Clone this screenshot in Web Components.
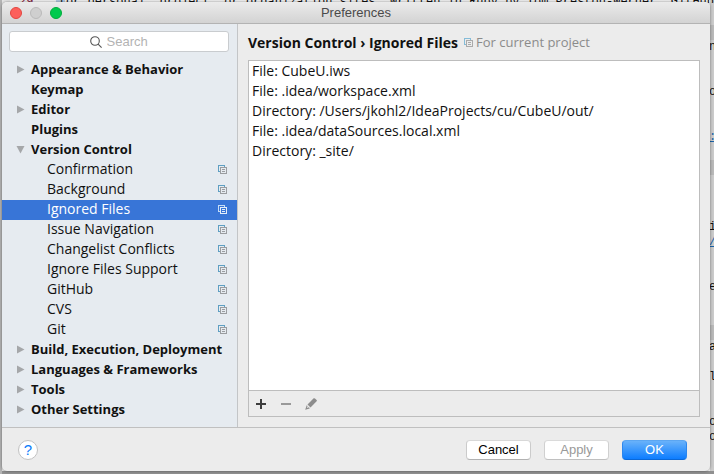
<!DOCTYPE html>
<html lang="en">
<head>
<meta charset="utf-8">
<title>Preferences</title>
<style>
  body { margin: 0; min-height: 100vh; display: flex; position: relative; overflow: hidden; font: 14px "Open Sans", "Noto Sans", sans-serif; color: #111; }
</style>
</head>
<body>
<code-backdrop></code-backdrop>
<pref-window heading="Preferences">
  <pref-sidebar slot="side">
    <tree-row group state="closed">Appearance &amp; Behavior</tree-row>
    <tree-row group>Keymap</tree-row>
    <tree-row group state="closed">Editor</tree-row>
    <tree-row group>Plugins</tree-row>
    <tree-row group state="open">Version Control</tree-row>
    <tree-row>Confirmation</tree-row>
    <tree-row>Background</tree-row>
    <tree-row selected>Ignored Files</tree-row>
    <tree-row>Issue Navigation</tree-row>
    <tree-row>Changelist Conflicts</tree-row>
    <tree-row>Ignore Files Support</tree-row>
    <tree-row>GitHub</tree-row>
    <tree-row>CVS</tree-row>
    <tree-row>Git</tree-row>
    <tree-row group state="closed">Build, Execution, Deployment</tree-row>
    <tree-row group state="closed">Languages &amp; Frameworks</tree-row>
    <tree-row group state="closed">Tools</tree-row>
    <tree-row group state="closed">Other Settings</tree-row>
  </pref-sidebar>
  <ignored-panel slot="main">
    <span slot="path">Version Control › Ignored Files</span>
    <span slot="scope">For current project</span>
    <list-line>File: CubeU.iws</list-line>
    <list-line>File: .idea/workspace.xml</list-line>
    <list-line>Directory: /Users/jkohl2/IdeaProjects/cu/CubeU/out/</list-line>
    <list-line>File: .idea/dataSources.local.xml</list-line>
    <list-line>Directory: _site/</list-line>
  </ignored-panel>
  <dialog-button slot="actions">Cancel</dialog-button>
  <dialog-button slot="actions" disabled>Apply</dialog-button>
  <dialog-button slot="actions" primary>OK</dialog-button>
</pref-window>
<script>
const define = (name, html, setup) => customElements.define(name, class extends HTMLElement {
  constructor() {
    super();
    const t = document.createElement('template');
    t.innerHTML = html;
    this.attachShadow({ mode: 'open' }).append(t.content.cloneNode(true));
  }
  connectedCallback() { if (setup) setup(this, this.shadowRoot); }
});

define('copy-icon', `
<style>
  :host { display: block; flex: none; width: 9px; height: 9px; --front: #9a9da0; --back: #5f9fc2; }
  svg { display: block; }
</style>
<svg width="9" height="9" viewBox="0 0 9 9" fill="none" shape-rendering="crispEdges" aria-hidden="true">
  <path d="M6.5 1.5V.5H.5V6.5H2" stroke="var(--icon-back, var(--back))"/>
  <path d="M2.5 2.5H8.5V8.5H2.5ZM4 4.5H7M4 6.5H7" stroke="var(--icon-front, var(--front))"/>
</svg>`);

define('tree-row', `
<style>
  :host { display: flex; align-items: center; box-sizing: border-box; height: 20px; padding: 0 10px 2px 45px; font-size: 14px; line-height: 18px; white-space: nowrap; }
  :host([group]) { padding: 0 0 2px 14px; font-size: 13px; font-weight: 700; }
  :host([selected]) { background: #3875d7; color: #fff; --icon-back: #c5dcf5; --icon-front: #e3edfa; }
  .text { flex: 1; }
  svg { display: none; flex: none; width: 9px; height: 9px; margin-right: 6px; fill: #a5a7a9; }
  :host([group]) svg { display: block; visibility: hidden; }
  :host([state]) svg { visibility: visible; }
  :host([state="open"]) svg { transform: rotate(90deg); }
  :host([group]) copy-icon { display: none; }
</style>
<svg viewBox="0 0 9 9" aria-hidden="true"><path d="M1 0.5 8.5 4.5 1 8.5Z"/></svg>
<span class="text"><slot></slot></span>
<copy-icon></copy-icon>`, el => { el.setAttribute('role', 'treeitem'); });

define('pref-sidebar', `
<style>
  :host { display: flex; flex-direction: column; background: #e6ebf0; border-right: 1px solid #c3c5c7; }
  label { display: flex; align-items: center; justify-content: center; gap: 5px; height: 19px; margin: 7px 8px 8px 7px; background: #fff; border: 1px solid #c9cccf; border-radius: 3px; }
  svg { flex: none; }
  input { width: 42px; padding: 0; border: 0; outline: 0; background: none; font: 13px "Liberation Sans", Arial, sans-serif; }
  input::placeholder { color: #b3b3b3; opacity: 1; }
</style>
<label>
  <svg width="12" height="12" viewBox="0 0 12 12" fill="none" stroke="#555" stroke-width="1.1" aria-hidden="true"><circle cx="5" cy="5" r="4.3"/><path d="M8.1 8.1 11.6 11.6"/></svg>
  <input type="text" placeholder="Search" aria-label="Search">
</label>
<div role="tree"><slot></slot></div>`);

define('list-line', `
<style>:host { display: block; height: 20px; padding: 0 3px; line-height: 20px; white-space: nowrap; }</style>
<slot></slot>`);

define('ignored-panel', `
<style>
  :host { display: flex; flex-direction: column; padding: 0 10px 10px; }
  header { display: flex; align-items: center; height: 36px; white-space: nowrap; }
  .path { font-weight: 700; flex: none; }
  copy-icon { margin: 0 3px 0 6px; --icon-back: #85bcd8; --icon-front: #aaa; }
  .scope { font-size: 13px; color: #8b8b8b; }
  .box { flex: 1; display: flex; flex-direction: column; border: 1px solid #bdbdbd; }
  .list { flex: 1; background: #fff; }
  .tools { display: flex; gap: 5px; height: 25px; padding-left: 2px; border-top: 1px solid #bdbdbd; }
  button { display: grid; place-items: center; width: 20px; padding: 0; border: 0; background: none; }
</style>
<header><span class="path"><slot name="path"></slot></span><copy-icon></copy-icon><span class="scope"><slot name="scope"></slot></span></header>
<div class="box">
  <div class="list"><slot></slot></div>
  <div class="tools">
    <button aria-label="Add"><svg width="10" height="10" viewBox="0 0 10 10" shape-rendering="crispEdges" fill="#3d3d3d"><path d="M4 0H6V4H10V6H6V10H4V6H0V4H4Z"/></svg></button>
    <button aria-label="Remove" disabled><svg width="10" height="10" viewBox="0 0 10 10" shape-rendering="crispEdges" fill="#999"><path d="M0 4H10V6H0Z"/></svg></button>
    <button aria-label="Edit" disabled><svg width="12" height="12" viewBox="0 0 12 12" fill="#8c8c8c"><path d="M8.7.3Q9.3-.1 10 .5L11.6 2Q12.2 2.7 11.6 3.3L5.5 9.4 2.5 6.5Z"/><path d="M1.7 7.2.2 11.8 4.8 10.4 4 9.3 1.9 9.9 2.6 8Z"/></svg></button>
  </div>
</div>`);

define('dialog-button', `
<style>
  :host { display: block; }
  button { display: block; width: 65px; height: 20px; padding: 0; border: 1px solid; border-color: #d8d8d8 #cbcbcb #b2b2b2; border-radius: 4px; background: #fff; color: #000; font: 13px/18px "Liberation Sans", Arial, sans-serif; }
  :host([disabled]) button { color: #999; border-color: #dadada #d0d0d0 #c0c0c0; }
  :host([primary]) button { background: linear-gradient(#69b2fa, #0d7dff); border-color: #5ba6f2 #2c87ee #0a68d8; color: #fff; }
</style>
<button><slot></slot></button>`, (el, root) => { root.querySelector('button').disabled = el.hasAttribute('disabled'); });

define('pref-window', `
<style>
  :host { flex: 1; display: flex; flex-direction: column; position: relative; margin: 2px 4px 3px 2px; background: #ececec; border-radius: 5px; overflow: hidden; box-shadow: 0 0 3px rgba(0,0,0,.45); }
  .title { display: grid; grid-template-columns: 1fr auto 1fr; align-items: center; height: 21px; padding: 0 8px; border-bottom: 1px solid #b3b3b3; background: linear-gradient(#ebebeb, #d3d3d3); color: #4a4a4a; font: 13px/21px "Liberation Sans", Arial, sans-serif; }
  .lights { display: flex; gap: 8px; }
  .lights button { width: 12px; height: 12px; padding: 0; border: 1px solid #e2463f; border-radius: 50%; background: #fc605b; }
  .lights button:nth-child(2) { background: #cfcfcf; border-color: #bababa; }
  .lights button:nth-child(3) { background: #00ca4e; border-color: #00ac3c; }
  .body { flex: 1; display: grid; grid-template-columns: minmax(0, 1fr) minmax(0, 2fr); }
  footer { display: flex; align-items: center; gap: 13px; height: 43px; padding: 0 23px 0 16px; border-top: 1px solid #c0c0c0; }
  .help { width: 20px; height: 20px; margin-right: auto; padding: 0; border: 1px solid #c2c2c2; border-radius: 50%; background: #fff; color: #0a7bfa; font: 15px/18px "Liberation Sans", Arial, sans-serif; }
</style>
<div class="title">
  <div class="lights"><button aria-label="Close"></button><button aria-label="Minimize" disabled></button><button aria-label="Zoom"></button></div>
  <span></span>
</div>
<div class="body"><slot name="side"></slot><slot name="main"></slot></div>
<footer><button class="help" aria-label="Help">?</button><slot name="actions"></slot></footer>`,
(el, root) => { root.querySelector('.title > span').textContent = el.getAttribute('heading'); });

define('code-backdrop', `
<style>
  :host { position: absolute; inset: 0; overflow: hidden; background: linear-gradient(90deg, #b4b4b4 0 2px, transparent 2px), linear-gradient(transparent calc(100% - 3px), #909090 0), linear-gradient(90deg, #e6e6e6 0 10px, #f1f1f1 10px 31px, #bbb 31px 32px, #f4f4f4 32px 56px, #b5cae0 56px 65px, #f4f4f4 65px calc(100% - 4px), #cbcbcb 0); font: 12px/15px "Liberation Mono", monospace; color: #111; }
  div { position: absolute; white-space: pre; }
  .top { top: -5px; left: 19px; right: 0; height: 8px; display: flex; overflow: hidden; }
  .num { color: #8c2340; width: 53px; }
  .edge { top: -5px; right: 0; width: 5px; }
  .edge span { display: block; height: 15px; }
  .edge .band { background: #b9b9b9; }
  .edge a { color: #1a63a8; }
</style>
<div class="top"><span class="num">29</span><span>for personal, project, or organization sites. Written in Ruby by Tom Preston-Werner, GitHub</span></div>
<div class="edge"></div>`, (el, root) => {
  const marks = { 3: 'n', 6: 'o', 9: ':', 15: 'i', 16: '/', 19: 'e', 23: 'a', 25: 'l', 28: 'o', 29: 'o' };
  const edge = root.querySelector('.edge');
  edge.innerHTML = Array.from({ length: 32 }, (_, i) => {
    const t = marks[i] || '';
    const band = i === 2 || i === 11 || i === 22 ? ' class="band"' : '';
    return `<span${band}>${i === 9 || i === 16 ? `<a href="#">${t}</a>` : t}</span>`;
  }).join('');
});
</script>
</body>
</html>
